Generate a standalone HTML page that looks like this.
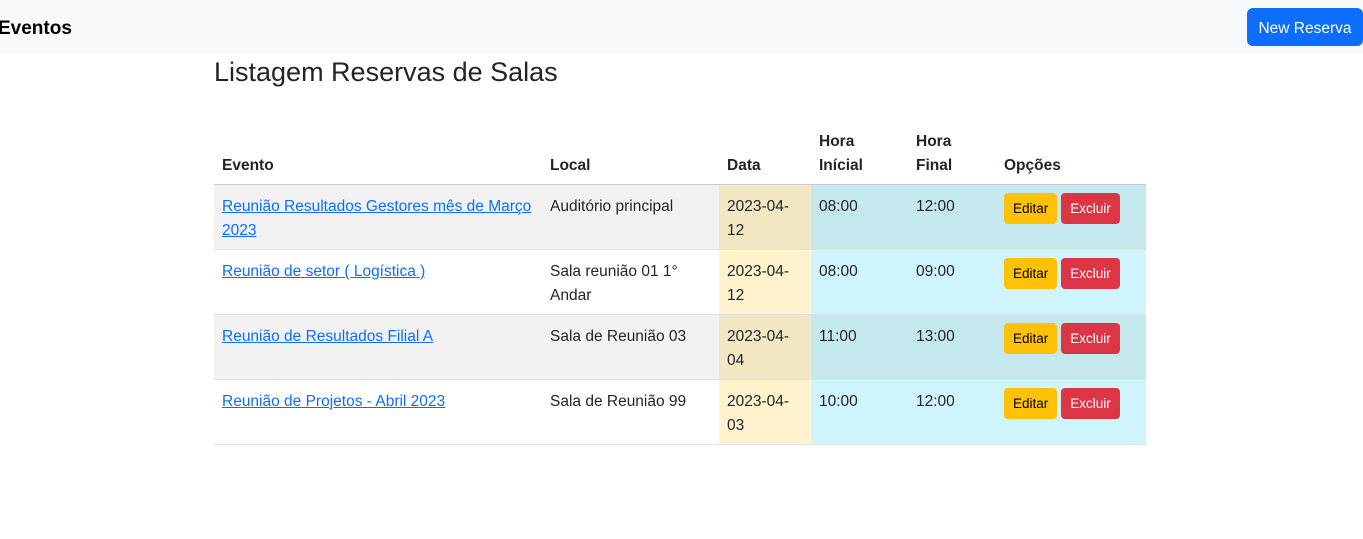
<!DOCTYPE html>
<html><head><meta charset="utf-8"><style>
*{box-sizing:border-box;margin:0;padding:0}
body{width:1363px;height:539px;background:#fff;font-family:"Liberation Sans",sans-serif;font-size:16px;color:#212529;overflow:hidden;position:relative}
.nav{position:absolute;left:0;top:0;width:1363px;height:54px;background:#f8f9fa}
.brand{position:absolute;left:-2px;top:18px;font-size:19px;font-weight:bold;color:#000}
.newbtn{position:absolute;left:1247px;top:8px;width:116px;height:38px;background:#0d6efd;color:#fff;border-radius:6px;font-size:15.5px;line-height:42px;text-align:center}
h3{position:absolute;left:214px;top:57px;font-size:27px;font-weight:500;font-family:"Liberation Sans",sans-serif}
table{position:absolute;left:214px;top:120px;width:932px;border-collapse:collapse}
td,th{vertical-align:top;text-align:left;padding:10px 8px 6px;line-height:24px;font-size:15.5px;border-bottom:1px solid #dee2e6}
th{vertical-align:bottom;font-weight:bold;height:59px;border-bottom:1px solid #c8ccd0}
tbody tr{height:65px}
a{color:#0d6efd;text-decoration:underline}
.s td{background:#f2f2f2}
.w{background:#fff3cd}
.s td.w{background:#f2e7c3}
.i{background:#cff4fc}
.s td.i{background:#c5e8ef}
.b{display:inline-block;height:31px;line-height:31px;padding:0 9px;border-radius:4px;font-size:13.5px;margin-top:-2px;vertical-align:top}
.e{background:#ffc107;color:#000}
.x{background:#dc3545;color:#fff;margin-left:4px}
</style></head><body>
<div class="nav"><div class="brand">Eventos</div><div class="newbtn">New Reserva</div></div>
<h3>Listagem Reservas de Salas</h3>
<table>
<colgroup><col style="width:328px"><col style="width:177px"><col style="width:92px"><col style="width:97px"><col style="width:88px"><col style="width:150px"></colgroup>
<thead><tr><th>Evento</th><th>Local</th><th>Data</th><th>Hora<br>Inícial</th><th>Hora<br>Final</th><th>Opções</th></tr></thead>
<tbody>
<tr class="s"><td><a>Reunião Resultados Gestores mês de Março 2023</a></td><td>Auditório principal</td><td class="w">2023-04-12</td><td class="i">08:00</td><td class="i">12:00</td><td class="i"><span class="b e">Editar</span><span class="b x">Excluir</span></td></tr>
<tr><td><a>Reunião de setor ( Logística )</a></td><td>Sala reunião 01 1° Andar</td><td class="w">2023-04-12</td><td class="i">08:00</td><td class="i">09:00</td><td class="i"><span class="b e">Editar</span><span class="b x">Excluir</span></td></tr>
<tr class="s"><td><a>Reunião de Resultados Filial A</a></td><td>Sala de Reunião 03</td><td class="w">2023-04-04</td><td class="i">11:00</td><td class="i">13:00</td><td class="i"><span class="b e">Editar</span><span class="b x">Excluir</span></td></tr>
<tr><td><a>Reunião de Projetos - Abril 2023</a></td><td>Sala de Reunião 99</td><td class="w">2023-04-03</td><td class="i">10:00</td><td class="i">12:00</td><td class="i"><span class="b e">Editar</span><span class="b x">Excluir</span></td></tr>
</tbody></table>
</body></html>
